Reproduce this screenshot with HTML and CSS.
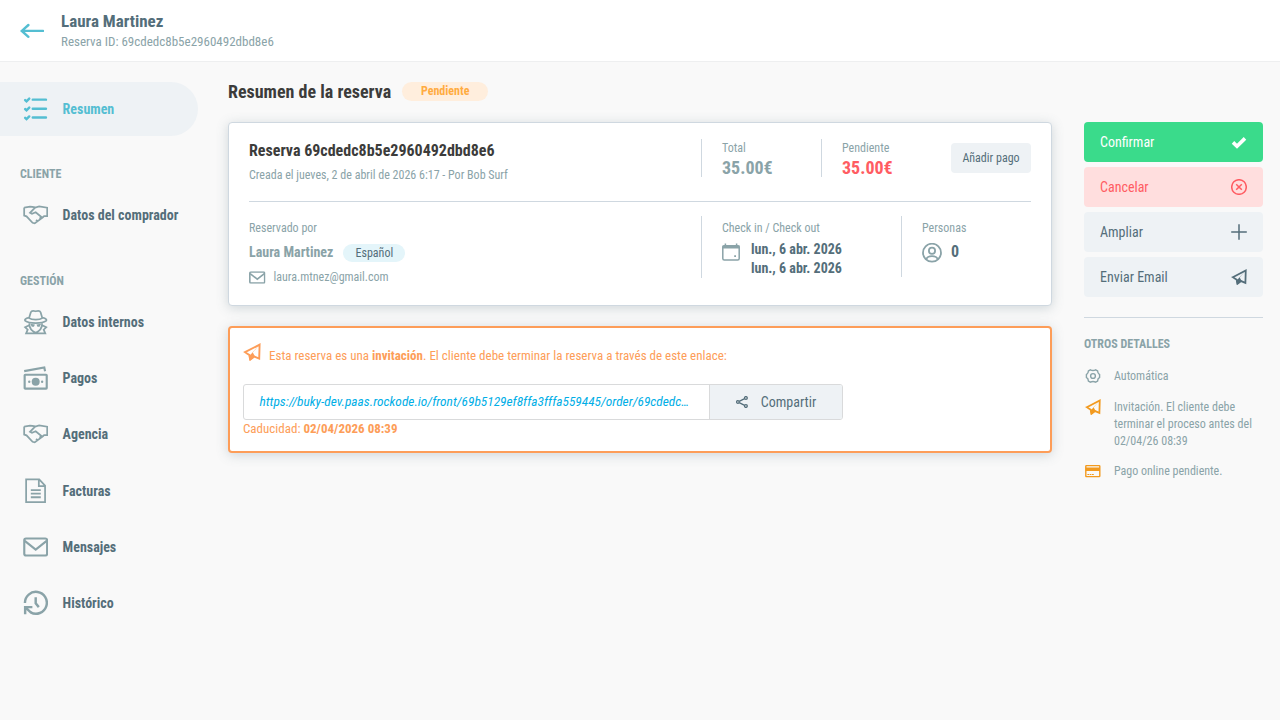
FILE: index.html
```html
<!DOCTYPE html>
<html lang="es">
<head>
  <meta charset="UTF-8">
  <meta name="viewport" content="width=device-width, initial-scale=1.0">
  <title>Reserva - Laura Martinez</title>
  <link rel="stylesheet" href="styles.css">
</head>
<body>
  <svg class="sprite">
    <symbol id="handshake" viewBox="0 0 26 20">
      <path d="M1.2 2.4 7.2 1.5 9.5 1.6 12.6 2.3 16.5 1.2 24.8 2.5V11.2H21.6L19.8 12.8M1.2 2.4V10.6L3.6 11.4 9.8 18 12 18.6 19.8 12.8 13 7.2 9.2 8.8 7.2 7.8 12.6 2.3M14.6 14.8 13.3 16.8M17 12.6 18.4 14.3"/>
    </symbol>
    <symbol id="mail" viewBox="0 0 26 20">
      <rect x="1.3" y="1.3" width="23.4" height="17.4" rx="1.8"/>
      <path d="M1.8 3.8 13 12.6 24.2 3.8"/>
    </symbol>
    <symbol id="plane" viewBox="0 0 18 18">
      <path d="M2 9.2 16.6 1.7 16.2 15.6 11.4 13.6 7.6 16.4 6.6 12.2Z"/>
      <path class="solid" d="M.6 9.2 6.4 13 17 1 9.8 9.6 12 13.4 6.4 18 5.4 12.2Z"/>
    </symbol>
  </svg>

  <header class="topbar">
    <svg class="back" viewBox="0 0 24 16"><path d="M8.4 2 1.8 7.9 8.4 13.8M2 7.9H23"/></svg>
    <div>
      <h1>Laura Martinez</h1>
      <p>Reserva ID: 69cdedc8b5e2960492dbd8e6</p>
    </div>
  </header>

  <div class="layout">
    <nav class="sidebar">
      <a class="item active">
        <svg class="icon" viewBox="0 0 26 26"><path d="M10 3.4H23.5M10 12.7H23.5M10 21.8H23.5M2.2 3.9 3.6 5.2 6.4 2.4M2.2 13 3.6 14.3 6.4 11.5M2.2 22.1 3.6 23.4 6.4 20.6"/></svg>
        <span>Resumen</span>
      </a>
      <h4 class="cliente">CLIENTE</h4>
      <a class="item">
        <svg class="icon thin low"><use href="#handshake"/></svg>
        <span>Datos del comprador</span>
      </a>
      <h4 class="gestion">GESTIÓN</h4>
      <a class="item">
        <svg class="icon thin" viewBox="0 0 26 26"><path d="M6.2 9 8 3C8.8 .9 11.4 1.5 13 2 14.6 1.5 17.2 .9 18 3L19.8 9C17 11 9 11 6.2 9ZM6 8.6C2.4 9.2 1.4 10.6 2.4 11.8 6 14.8 20 14.8 23.6 11.8 24.6 10.6 23.6 9.2 20 8.6M6.4 14.6C6.4 19.4 9.2 22.4 13 24 16.8 22.4 19.6 19.4 19.6 14.6M5.8 16.6 2.2 18.4 4.8 20.8 3.2 24.6H22.8L21.2 20.8 23.8 18.4 20.2 16.6"/><path class="solid" d="M7.4 14.8 12.2 15.6 11.2 17.8H9ZM18.6 14.8 13.8 15.6 14.8 17.8H17Z"/></svg>
        <span>Datos internos</span>
      </a>
      <a class="item">
        <svg class="icon" viewBox="0 0 26 26"><rect x="1.7" y="9.7" width="22.6" height="14.2" rx=".6"/><path d="M1.2 6 21.8 2.3 22.6 6"/><circle class="solid" cx="13" cy="16.8" r="4.1"/><circle class="solid" cx="6.4" cy="16.8" r="1.2"/><circle class="solid" cx="19.6" cy="16.8" r="1.2"/></svg>
        <span>Pagos</span>
      </a>
      <a class="item">
        <svg class="icon thin low"><use href="#handshake"/></svg>
        <span>Agencia</span>
      </a>
      <a class="item">
        <svg class="icon thin" viewBox="0 0 26 26"><path d="M3.2 1.2H16.6L22.6 7.4V24.4H3.2ZM16.2 1.4V8H22.4M8 12H18.2M8 15.7H18.2M8 19.4H18.2"/></svg>
        <span>Facturas</span>
      </a>
      <a class="item">
        <svg class="icon low"><use href="#mail"/></svg>
        <span>Mensajes</span>
      </a>
      <a class="item">
        <svg class="icon heavy" viewBox="0 0 26 26"><path d="M2 13A11.2 11.2 0 1 1 7.8 22.6"/><path d="M13 7V13.4L16.2 17.2"/><path d="M2.2 24.4V17.2H9.6M2.4 17.4 8.2 22.8"/></svg>
        <span>Histórico</span>
      </a>
    </nav>

    <main class="content">
      <div class="heading">
        <h2>Resumen de la reserva</h2>
        <span class="badge">Pendiente</span>
      </div>

      <section class="card">
        <div class="row top">
          <div class="who">
            <h3>Reserva 69cdedc8b5e2960492dbd8e6</h3>
            <p>Creada el jueves, 2 de abril de 2026 6:17 - Por Bob Surf</p>
          </div>
          <div class="amount">
            <span>Total</span>
            <strong>35.00€</strong>
          </div>
          <div class="amount due">
            <span>Pendiente</span>
            <strong>35.00€</strong>
          </div>
          <button class="pay">Añadir pago</button>
        </div>
        <div class="row bottom">
          <div class="who">
            <span class="label">Reservado por</span>
            <div class="name"><strong>Laura Martinez</strong><span class="lang">Español</span></div>
            <div class="email"><svg viewBox="0 0 26 20"><use href="#mail"/></svg><span>laura.mtnez@gmail.com</span></div>
          </div>
          <div class="dates">
            <span class="label">Check in / Check out</span>
            <div class="value">
              <svg class="calendar" viewBox="0 0 20 20"><rect x=".8" y="2.8" width="16.4" height="14.2" rx="1.5"/><path d="M3.4 .4V3.4M14.6 .4V3.4"/><path class="solid" d="M.4 2.4H17.6V5.6H.4ZM12.2 12.2H14V14H12.2Z"/></svg>
              <strong>lun., 6 abr. 2026<br>lun., 6 abr. 2026</strong>
            </div>
          </div>
          <div class="people">
            <span class="label">Personas</span>
            <div class="value">
              <svg class="person" viewBox="0 0 20 20"><circle cx="10" cy="9.7" r="9"/><circle cx="10" cy="7.8" r="3.1"/><path d="M4.4 16.2C5.2 13.7 7.4 13.2 10 13.2S14.8 13.7 15.6 16.2"/></svg>
              <strong class="count">0</strong>
            </div>
          </div>
        </div>
      </section>

      <section class="card invite">
        <p class="message"><svg><use href="#plane"/></svg><span>Esta reserva es una <b>invitación</b>. El cliente debe terminar la reserva a través de este enlace:</span></p>
        <div class="share">
          <a class="link">https://buky-dev.paas.rockode.io/front/69b5129ef8ffa3fffa559445/order/69cdedc…</a>
          <button>
            <svg viewBox="0 0 12 12"><circle cx="1.9" cy="6" r="1.3"/><circle cx="9.9" cy="2" r="1.4"/><circle cx="9.9" cy="10" r="1.4"/><path d="M3.2 5.3 8.6 2.7M3.2 6.7 8.6 9.3"/></svg>
            <span>Compartir</span>
          </button>
        </div>
        <p class="expires">Caducidad: <b>02/04/2026 08:39</b></p>
      </section>
    </main>

    <aside class="actions">
      <button class="confirm"><span>Confirmar</span><svg viewBox="0 0 16 16"><path d="M2 8.4 6 12.2 14 4.4"/></svg></button>
      <button class="cancel"><span>Cancelar</span><svg viewBox="0 0 16 16"><circle cx="8" cy="8" r="7.3"/><path d="M5.2 5.2 10.8 10.8M10.8 5.2 5.2 10.8"/></svg></button>
      <button><span>Ampliar</span><svg viewBox="0 0 16 16"><path d="M8 .2V15.8M.2 8H15.8"/></svg></button>
      <button><span>Enviar Email</span><svg class="send" viewBox="0 0 18 18"><use href="#plane"/></svg></button>

      <div class="details">
        <h4>OTROS DETALLES</h4>
        <div class="detail">
          <svg viewBox="0 0 16 16"><path d="M5.4 1.8Q8 3.2 10.6 1.8L12.6 3Q12.6 5.2 14.6 6.6V9.4Q12.6 10.8 12.6 13L10.6 14.2Q8 12.8 5.4 14.2L3.4 13Q3.4 10.8 1.4 9.4V6.6Q3.4 5.2 3.4 3Z"/><circle cx="8" cy="8" r="2.4"/></svg>
          <span>Automática</span>
        </div>
        <div class="detail warn">
          <svg class="send" viewBox="0 0 18 18"><use href="#plane"/></svg>
          <span>Invitación. El cliente debe terminar el proceso antes del 02/04/26 08:39</span>
        </div>
        <div class="detail warn">
          <svg viewBox="0 0 16 16"><rect x=".8" y="2.6" width="14" height="11" rx=".6"/><path class="solid" d="M.6 4.6H15V8H.6ZM2.4 11H4.4V12H2.4ZM5 11H6.2V12H5ZM6.8 11H8.8V12H6.8Z"/></svg>
          <span>Pago online pendiente.</span>
        </div>
      </div>
    </aside>
  </div>
</body>
</html>
```
FILE: styles.css
```css
* {
  box-sizing: border-box;
}
body {
  margin: 0;
  height: 720px;
  overflow: hidden;
  background: #f9f9f9;
  color: #8aa3a8;
  font-family: "Roboto Condensed", Roboto, sans-serif;
  font-stretch: 75%;
  font-size: 12px;
}
h1, h2, h3, h4, p {
  margin: 0;
}
button {
  border: 0;
  font: inherit;
  font-stretch: 75%;
}
svg {
  fill: none;
  stroke: currentColor;
  stroke-width: 1.5;
  flex-shrink: 0;
}
.sprite {
  display: none;
}
.solid {
  fill: currentColor;
  stroke: none;
}

/* cabecera */
.topbar {
  display: flex;
  height: 62px;
  padding: 11px 20px 0;
  background: #fff;
  border-bottom: 1px solid #eeeff0;
}
.back {
  width: 24px;
  height: 16px;
  margin: 12px 17px 0 0;
  color: #54bed2;
  stroke-width: 2.4;
  stroke-linecap: round;
}
.topbar h1 {
  font-size: 17px;
  line-height: 20px;
  color: #546e7a;
}
.topbar p {
  font-size: 13px;
  line-height: 21px;
}

.layout {
  display: flex;
  padding-top: 20px;
}

/* menu lateral */
.sidebar {
  width: 198px;
  margin-right: 30px;
}
.item {
  display: flex;
  align-items: center;
  height: 54px;
  margin-bottom: 2.2px;
  padding-left: 22.6px;
  gap: 14.6px;
  font-size: 14px;
  font-weight: bold;
  color: #546e7a;
}
.icon {
  width: 25.4px;
  height: 26px;
  color: #8aa3a8;
  stroke-width: 2.2;
}
.icon.low {
  height: 20px;
}
.icon.thin {
  stroke-width: 1.8;
}
.icon.heavy {
  stroke-width: 2.5;
}
.active {
  margin-bottom: 0;
  border-radius: 0 27px 27px 0;
  background: #eef2f5;
}
.active, .active .icon {
  color: #54bed2;
  stroke-linecap: round;
}
.active .icon {
  stroke-width: 2.5;
}
.sidebar h4, .details h4 {
  font-size: 12px;
  line-height: 16px;
}
.sidebar h4 {
  padding-left: 20px;
}
.cliente {
  margin: 30px 0 6px;
}
.gestion {
  margin: 31px 0 6px;
}

/* contenido */
.content {
  width: 824px;
  margin-right: 32px;
}
.heading {
  display: flex;
  height: 40px;
}
.heading h2 {
  font-size: 18px;
  line-height: 20px;
  color: #3c3c3b;
}
.badge {
  width: 86px;
  height: 19px;
  margin-left: 11px;
  border-radius: 10px;
  background: #ffeedd;
  color: #ffab40;
  font-weight: bold;
  line-height: 19px;
  text-align: center;
}
.card {
  padding: 16px 20px;
  border: 1px solid #cfd8e0;
  border-radius: 4px;
  background: #fff;
  box-shadow: 0 2px 12px rgba(84, 110, 122, .25);
}
.row {
  display: flex;
}
.who {
  width: 452px;
}
.top {
  height: 63px;
  border-bottom: 1px solid #cfd8e0;
}
.top h3 {
  font-size: 16px;
  line-height: 24px;
  color: #3c3c3b;
}
.top p {
  line-height: 24px;
}
.amount {
  display: flex;
  flex-direction: column;
  width: 120px;
  height: 38px;
  padding-left: 20px;
  border-left: 1px solid #cfd8e0;
}
.amount span {
  line-height: 18px;
}
.amount strong {
  font-size: 18px;
  line-height: 22px;
}
.due strong {
  color: #ff5c62;
}
.pay {
  width: 80px;
  height: 30px;
  margin: 4px 0 0 auto;
  padding: 0;
  border-radius: 4px;
  background: #eef2f5;
  color: #546e7a;
}
.bottom {
  height: 87px;
  padding-top: 14px;
}
.label {
  display: block;
  padding-top: 3px;
  line-height: 18px;
}
.name {
  display: flex;
  align-items: center;
  gap: 10px;
  height: 20px;
  margin-top: 6px;
}
.name strong {
  font-size: 14px;
  line-height: 18px;
  padding-bottom: 2px;
}
.lang {
  width: 62px;
  height: 18px;
  border-radius: 9px;
  background: #e4f5fa;
  color: #546e7a;
  line-height: 18px;
  text-align: center;
}
.email {
  display: flex;
  align-items: center;
  gap: 8px;
  height: 28px;
}
.email svg {
  width: 16.5px;
  height: 13px;
  stroke-width: 2.5;
}
.dates, .people {
  padding-left: 20px;
  border-left: 1px solid #cfd8e0;
}
.dates {
  width: 200px;
  height: 62px;
}
.people {
  height: 61px;
}
.value {
  display: flex;
  margin-top: 3px;
  gap: 9px;
}
.value strong {
  font-size: 14px;
  line-height: 19px;
  color: #546e7a;
}
.value .count {
  font-size: 16px;
  line-height: 24px;
}
.calendar, .person {
  width: 20px;
  height: 20px;
  margin-top: 3px;
}
.person {
  stroke-width: 1.8;
}

/* invitacion */
.invite {
  height: 127px;
  margin-top: 20px;
  padding: 14px 13px;
  border: 2px solid #fd9d58;
  color: #fd9d58;
}
.message {
  display: flex;
  height: 42px;
  gap: 8px;
  font-size: 13px;
  line-height: 28px;
}
.message svg {
  width: 18px;
  height: 18px;
  margin-top: 1px;
  stroke-width: 1.9;
}
.share {
  display: flex;
  width: 600px;
  height: 36px;
  border: 1px solid #d9dadb;
  border-radius: 3px;
  overflow: hidden;
}
.link {
  width: 466px;
  padding-left: 15.5px;
  border-right: 1px solid #d9dadb;
  color: #00aee6;
  font-size: 13.4px;
  font-style: italic;
  line-height: 33px;
  white-space: nowrap;
}
.share button {
  display: flex;
  flex: 1;
  align-items: center;
  justify-content: center;
  gap: 13px;
  background: #eef2f5;
  color: #546e7a;
  font-size: 14px;
}
.share button svg {
  width: 12px;
  height: 12px;
  stroke-width: 1.3;
}
.expires {
  font-size: 13px;
  line-height: 18px;
}

/* acciones */
.actions {
  width: 179px;
  padding-top: 40px;
}
.actions button {
  display: flex;
  align-items: center;
  justify-content: space-between;
  width: 100%;
  height: 40px;
  margin-bottom: 5px;
  padding: 0 16px;
  border-radius: 4px;
  background: #eef2f5;
  color: #546e7a;
  font-size: 14px;
}
.actions button svg {
  width: 16px;
  height: 16px;
}
.actions .confirm {
  background: #3adb8b;
  color: #fff;
}
.actions .confirm svg {
  stroke-width: 3.6;
}
.actions .cancel {
  background: #ffdede;
  color: #ff5c62;
}
.details {
  margin-top: 20px;
  padding-top: 18px;
  border-top: 1px solid #cfd8e0;
}
.details h4 {
  margin-bottom: 16px;
}
.detail {
  display: flex;
  gap: 13px;
  margin-bottom: 13.5px;
  padding-left: 1px;
  line-height: 17px;
}
.detail svg {
  width: 16px;
  height: 16px;
  stroke-width: 1.4;
}
.actions .send {
  stroke-width: 2;
}
.warn svg {
  color: #f29a1f;
}
```
